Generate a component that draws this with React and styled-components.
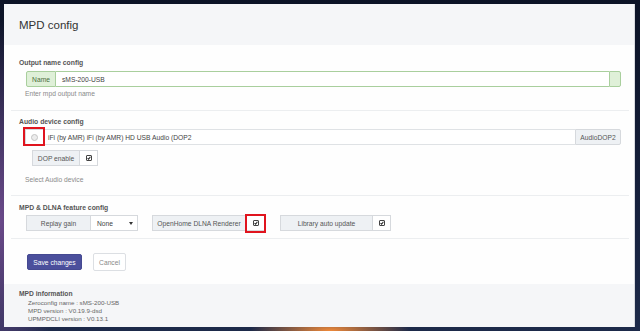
import React from "react";
import styled, { createGlobalStyle } from "styled-components";

const Global = createGlobalStyle`
  html, body { margin: 0; padding: 0; }
  body {
    width: 640px; height: 331px; overflow: hidden;
    font-family: "Liberation Sans", Arial, sans-serif;
    background:
      radial-gradient(ellipse 80px 20px at 330px 331px, #f08a3a 0%, rgba(240,138,58,0) 100%),
      radial-gradient(ellipse 60px 200px at 0px 220px, #6b4a8a 0%, rgba(107,74,138,0) 100%),
      linear-gradient(180deg, #0c1326 0%, #16203c 60%, #1d2a4a 100%);
  }
`;

const Frame = styled.div`
  padding: 4px 5px 4px 4px;
  box-sizing: border-box;
  height: 331px;
`;

const Panel = styled.div`
  background: #fefefe;
  border-right: 1px solid #d8dadf;
  height: 323px;
  display: flex;
  flex-direction: column;
  color: #555;
`;

const Header = styled.div`
  height: 41px;
  background: #f5f6f8;
  display: flex;
  align-items: center;
  padding: 1px 0 0 15px;
  box-sizing: border-box;
  font-size: 11.5px;
  color: #333;
`;

const Section = styled.div`
  margin: 0 5px 0 7px;
  padding: ${p => p.$pad || "0"};
  border-bottom: ${p => (p.$last ? "none" : "1px solid #eceef0")};
  display: flex;
  flex-direction: column;
`;

const Label = styled.div`
  font-size: 6.8px;
  font-weight: bold;
  line-height: 10px;
  height: 10px;
  color: #555;
  padding-left: 8px;
`;

const Help = styled.div`
  font-size: 6.7px;
  line-height: 10px;
  color: #8a8a8a;
  padding-left: 14px;
  margin-top: ${p => p.$mt || "2px"};
`;

const Group = styled.div`
  display: flex;
  height: 16px;
  box-sizing: border-box;
  margin: ${p => p.$m || "0"};
  position: relative;
`;

const Addon = styled.div`
  display: flex;
  align-items: center;
  justify-content: center;
  box-sizing: border-box;
  width: ${p => p.$w};
  flex: none;
  white-space: nowrap;
  font-size: 6.7px;
  color: ${p => (p.$green ? "#4b6f40" : "#555")};
  background: ${p => (p.$green ? "#dff0d8" : p.$white ? "#fff" : "#eef1f4")};
  border: 1px solid ${p => (p.$green ? "#a9cf9d" : "#d6d9dd")};
  border-radius: ${p => p.$r || "0"};
  & + & { border-left: none; }
`;

const Field = styled.div`
  flex: 1;
  display: flex;
  align-items: center;
  box-sizing: border-box;
  padding-left: ${p => p.$pl || "6px"};
  font-size: 6.7px;
  color: #444;
  background: #fff;
  border: 1px solid ${p => (p.$green ? "#a9cf9d" : "#dfe2e5")};
  border-left: none;
  border-right: ${p => (p.$noRight ? "none" : undefined)};
`;

const Check = styled.span`
  width: 6px;
  height: 6px;
  border: 1px solid #444;
  border-radius: 1px;
  background: #fff;
  box-sizing: border-box;
  display: inline-flex;
  align-items: center;
  justify-content: center;
  svg { display: block; }
`;

const Radio = styled.span`
  width: 7px;
  height: 7px;
  border-radius: 50%;
  border: 1px solid #c4c4c4;
  background: #ececec;
  box-sizing: border-box;
`;

const Highlight = styled.div`
  position: absolute;
  border: 2px solid #e0141e;
  box-sizing: border-box;
  pointer-events: none;
`;

const Row = styled.div`
  display: flex;
  gap: 14px;
  margin: 2px 0 0 15px;
`;

const Select = styled.div`
  width: 47px;
  box-sizing: border-box;
  display: flex;
  align-items: center;
  justify-content: space-between;
  padding: 0 4px 0 6px;
  font-size: 6.7px;
  color: #444;
  background: #fff;
  border: 1px solid #d6d9dd;
  border-left: none;
  &::after {
    content: "";
    border-left: 2px solid transparent;
    border-right: 2px solid transparent;
    border-top: 3px solid #333;
  }
`;

const Buttons = styled.div`
  display: flex;
  gap: 11px;
  padding: 14px 0 0 23px;
  height: 45px;
  box-sizing: border-box;
`;

const Button = styled.button`
  height: ${p => (p.$primary ? "16px" : "18px")};
  margin-top: ${p => (p.$primary ? "1px" : "0")};
  padding: 0;
  width: ${p => p.$w};
  font-family: inherit;
  font-size: 6.7px;
  border-radius: 2px;
  color: ${p => (p.$primary ? "#fff" : "#888")};
  background: ${p => (p.$primary ? "#4b4f9c" : "#fff")};
  border: 1px solid ${p => (p.$primary ? "#454991" : "#dcdfe3")};
`;

const Footer = styled.div`
  flex: 1;
  background: #f5f6f8;
  padding: 5px 0 0 15px;
  display: flex;
  flex-direction: column;
`;

const FootTitle = styled.div`
  font-size: 6.7px;
  font-weight: bold;
  line-height: 10px;
  color: #555;
`;

const FootLine = styled.div`
  font-size: 6.2px;
  line-height: 8px;
  color: #666;
  padding-left: 9px;
`;

const Tick = () => (
  <svg width="4" height="4" viewBox="0 0 10 10">
    <path d="M1.5 5.5 L4 8 L8.5 2" fill="none" stroke="#222" strokeWidth="2.6" />
  </svg>
);

export default function App() {
  return (
    <>
      <Global />
      <Frame>
        <Panel>
          <Header>MPD config</Header>

          <Section $pad="13px 0 11px">
            <Label>Output name config</Label>
            <Group $m="3px 8px 0 15px">
              <Addon $green $w="30px" $r="2px 0 0 2px">Name</Addon>
              <Field $green $noRight>sMS-200-USB</Field>
              <Addon $green $w="12px" $r="0 2px 2px 0" />
            </Group>
            <Help>Enter mpd output name</Help>
          </Section>

          <Section $pad="6px 0 10px">
            <Label>Audio device config</Label>
            <Group $m="2px 8px 0 14px">
              <Addon $white $w="19px">
                <Radio />
              </Addon>
              <Field $pl="4px" $noRight>iFi (by AMR) iFi (by AMR) HD USB Audio (DOP2</Field>
              <Addon $w="46px" $r="0 2px 2px 0">AudioDOP2</Addon>
              <Highlight style={{ left: -2, top: -2, width: 22, height: 19 }} />
            </Group>
            <Group $m="5px 0 0 21px">
              <Addon $w="48px">DOP enable</Addon>
              <Addon $white $w="18px"><Check><Tick /></Check></Addon>
            </Group>
            <Help $mt="9px">Select Audio device</Help>
          </Section>

          <Section $pad="7px 0 7px">
            <Label>MPD &amp; DLNA feature config</Label>
            <Row>
              <Group>
                <Addon $w="65px">Replay gain</Addon>
                <Select>None</Select>
              </Group>
              <Group>
                <Addon $w="94px">OpenHome DLNA Renderer</Addon>
                <Addon $white $w="20px"><Check><Tick /></Check></Addon>
                <Highlight style={{ left: 93, top: -1, width: 21, height: 19 }} />
              </Group>
              <Group>
                <Addon $w="93px">Library auto update</Addon>
                <Addon $white $w="18px"><Check><Tick /></Check></Addon>
              </Group>
            </Row>
          </Section>

          <Buttons>
            <Button $primary $w="55px">Save changes</Button>
            <Button $w="33px">Cancel</Button>
          </Buttons>

          <Footer>
            <FootTitle>MPD information</FootTitle>
            <FootLine>Zeroconfig name : sMS-200-USB</FootLine>
            <FootLine>MPD version : V0.19.9-dsd</FootLine>
            <FootLine>UPMPDCLI version : V0.13.1</FootLine>
          </Footer>
        </Panel>
      </Frame>
    </>
  );
}
